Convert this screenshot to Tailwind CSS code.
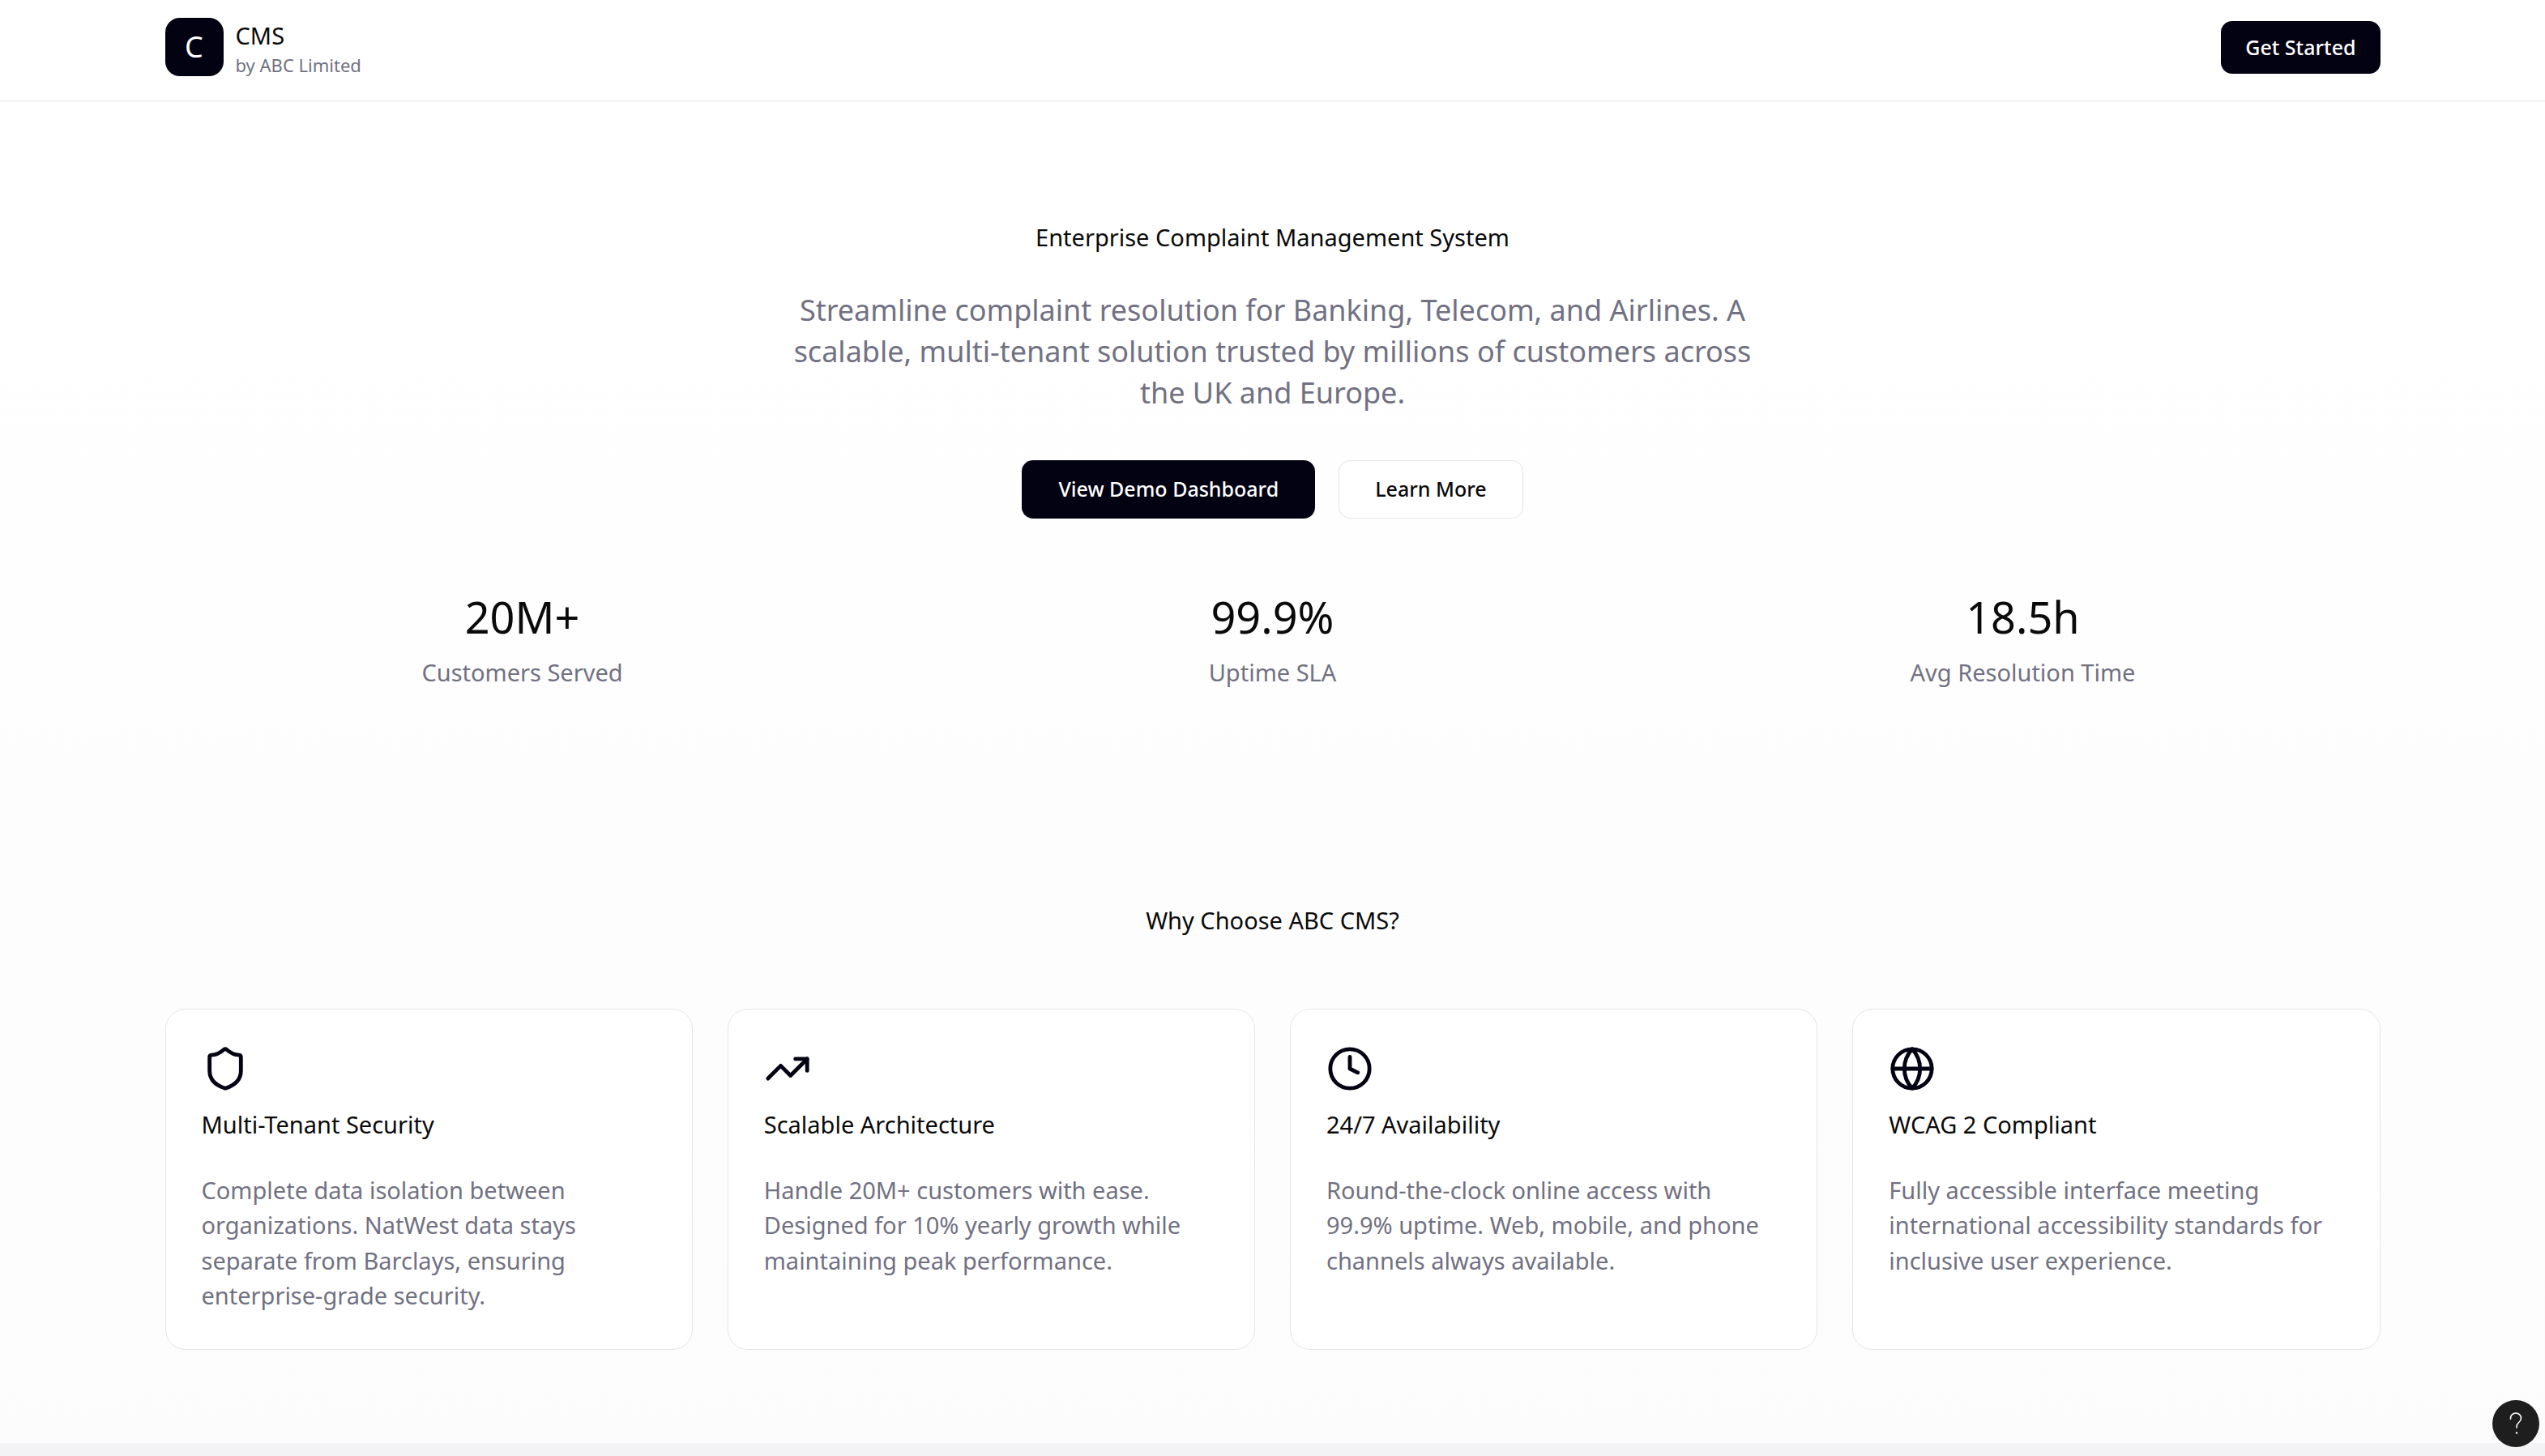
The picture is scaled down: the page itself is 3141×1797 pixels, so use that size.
<!DOCTYPE html>
<html lang="en">
<head>
<meta charset="utf-8">
<meta name="viewport" content="width=device-width, initial-scale=1">
<title>CMS by ABC Limited</title>
<script src="https://cdn.jsdelivr.net/npm/@tailwindcss/browser@4"></script>
</head>
<body class="flex min-h-screen flex-col bg-white font-['Noto_Sans',sans-serif] text-[29px] leading-normal text-neutral-950">
<header class="border-b border-[#e5e5e5] bg-white px-12 pt-[22px] pb-[29px]">
  <div class="mx-auto flex max-w-[2734px] items-center justify-between">
    <div class="flex items-center gap-[15px]">
      <div class="flex size-[72px] items-center justify-center rounded-[18px] bg-[#030213] text-[36px] text-white">C</div>
      <div>
        <p>CMS</p>
        <p class="text-[22px] leading-[29px] text-[#717182]">by ABC Limited</p>
      </div>
    </div>
    <button type="button" class="h-[65px] rounded-[14px] bg-[#030213] px-[30px] text-[25px] font-medium text-white">Get Started</button>
  </div>
</header>
<main class="bg-linear-to-b from-white to-[#fcfcfd] px-12">
  <div class="mx-auto max-w-[2734px]">
    <section class="pt-[146px] text-center">
      <h1>Enterprise Complaint Management System</h1>
      <p class="mx-auto mt-[43px] max-w-[1218px] text-[36px] leading-[51px] text-[#717182]">Streamline complaint resolution for Banking, Telecom, and Airlines. A scalable, multi-tenant solution trusted by millions of customers across the UK and Europe.</p>
      <div class="mt-[58px] flex justify-center gap-[29px]">
        <button type="button" class="h-[72px] rounded-[14px] bg-[#030213] px-[45px] text-[25px] font-medium text-white">View Demo Dashboard</button>
        <button type="button" class="h-[72px] rounded-[14px] border border-[#e5e5e5] bg-white px-[44px] text-[25px] font-medium">Learn More</button>
      </div>
      <dl class="mt-[85px] grid grid-cols-3 gap-[44px]">
        <div class="flex flex-col-reverse gap-[11px]"><dt class="text-[#717182]">Customers Served</dt><dd class="text-[54px] leading-[72px]">20M+</dd></div>
        <div class="flex flex-col-reverse gap-[11px]"><dt class="text-[#717182]">Uptime SLA</dt><dd class="text-[54px] leading-[72px]">99.9%</dd></div>
        <div class="flex flex-col-reverse gap-[11px]"><dt class="text-[#717182]">Avg Resolution Time</dt><dd class="text-[54px] leading-[72px]">18.5h</dd></div>
      </dl>
    </section>
    <section class="pt-[262px] pb-[115px]">
      <h2 class="text-center">Why Choose ABC CMS?</h2>
      <div class="mt-[88px] grid grid-cols-4 gap-[43px]">
        <article class="rounded-[25px] border border-[#e5e5e5] bg-white p-[44px]">
          <svg class="size-[58px] text-[#030213]" viewBox="0 0 24 24" fill="none" stroke="currentColor" stroke-width="2" stroke-linecap="round" stroke-linejoin="round" aria-hidden="true"><path d="M20 13c0 5-3.5 7.5-7.66 8.95a1 1 0 0 1-.67-.01C7.5 20.5 4 18 4 13V6a1 1 0 0 1 1-1c2 0 4.5-1.2 6.24-2.72a1.17 1.17 0 0 1 1.52 0C14.51 3.81 17 5 19 5a1 1 0 0 1 1 1z"/></svg>
          <h3 class="mt-[18px]">Multi-Tenant Security</h3>
          <p class="mt-[37px] text-[#717182]">Complete data isolation between organizations. NatWest data stays separate from Barclays, ensuring enterprise-grade security.</p>
        </article>
        <article class="rounded-[25px] border border-[#e5e5e5] bg-white p-[44px]">
          <svg class="size-[58px] text-[#030213]" viewBox="0 0 24 24" fill="none" stroke="currentColor" stroke-width="2" stroke-linecap="round" stroke-linejoin="round" aria-hidden="true"><path d="M16 7h6v6"/><path d="m22 7-8.5 8.5-5-5L2 17"/></svg>
          <h3 class="mt-[18px]">Scalable Architecture</h3>
          <p class="mt-[37px] text-[#717182]">Handle 20M+ customers with ease. Designed for 10% yearly growth while maintaining peak performance.</p>
        </article>
        <article class="rounded-[25px] border border-[#e5e5e5] bg-white p-[44px]">
          <svg class="size-[58px] text-[#030213]" viewBox="0 0 24 24" fill="none" stroke="currentColor" stroke-width="2" stroke-linecap="round" stroke-linejoin="round" aria-hidden="true"><circle cx="12" cy="12" r="10"/><path d="M12 6v6l4 2"/></svg>
          <h3 class="mt-[18px]">24/7 Availability</h3>
          <p class="mt-[37px] text-[#717182]">Round-the-clock online access with 99.9% uptime. Web, mobile, and phone channels always available.</p>
        </article>
        <article class="rounded-[25px] border border-[#e5e5e5] bg-white p-[44px]">
          <svg class="size-[58px] text-[#030213]" viewBox="0 0 24 24" fill="none" stroke="currentColor" stroke-width="2" stroke-linecap="round" stroke-linejoin="round" aria-hidden="true"><circle cx="12" cy="12" r="10"/><path d="M12 2a14.5 14.5 0 0 0 0 20 14.5 14.5 0 0 0 0-20"/><path d="M2 12h20"/></svg>
          <h3 class="mt-[18px]">WCAG 2 Compliant</h3>
          <p class="mt-[37px] text-[#717182]">Fully accessible interface meeting international accessibility standards for inclusive user experience.</p>
        </article>
      </div>
    </section>
  </div>
</main>
<footer class="flex-1 bg-[#f3f3f5]"></footer>
<button type="button" aria-label="Help" class="fixed right-[7px] bottom-[11px] flex size-[58px] items-center justify-center rounded-full bg-[#1e1e1e] text-white">
  <svg class="h-[28px] w-[16px]" viewBox="0 0 16 28" fill="none" stroke="currentColor" stroke-width="1.6" stroke-linecap="round" aria-hidden="true"><path d="M1.500 8.500v-1a6.500 6.500 0 0 1 13 0c0 5-5.500 5-5.500 10v1.500"/><circle cx="9" cy="25.500" r="1.200" fill="currentColor" stroke="none"/></svg>
</button>
</body>
</html>
